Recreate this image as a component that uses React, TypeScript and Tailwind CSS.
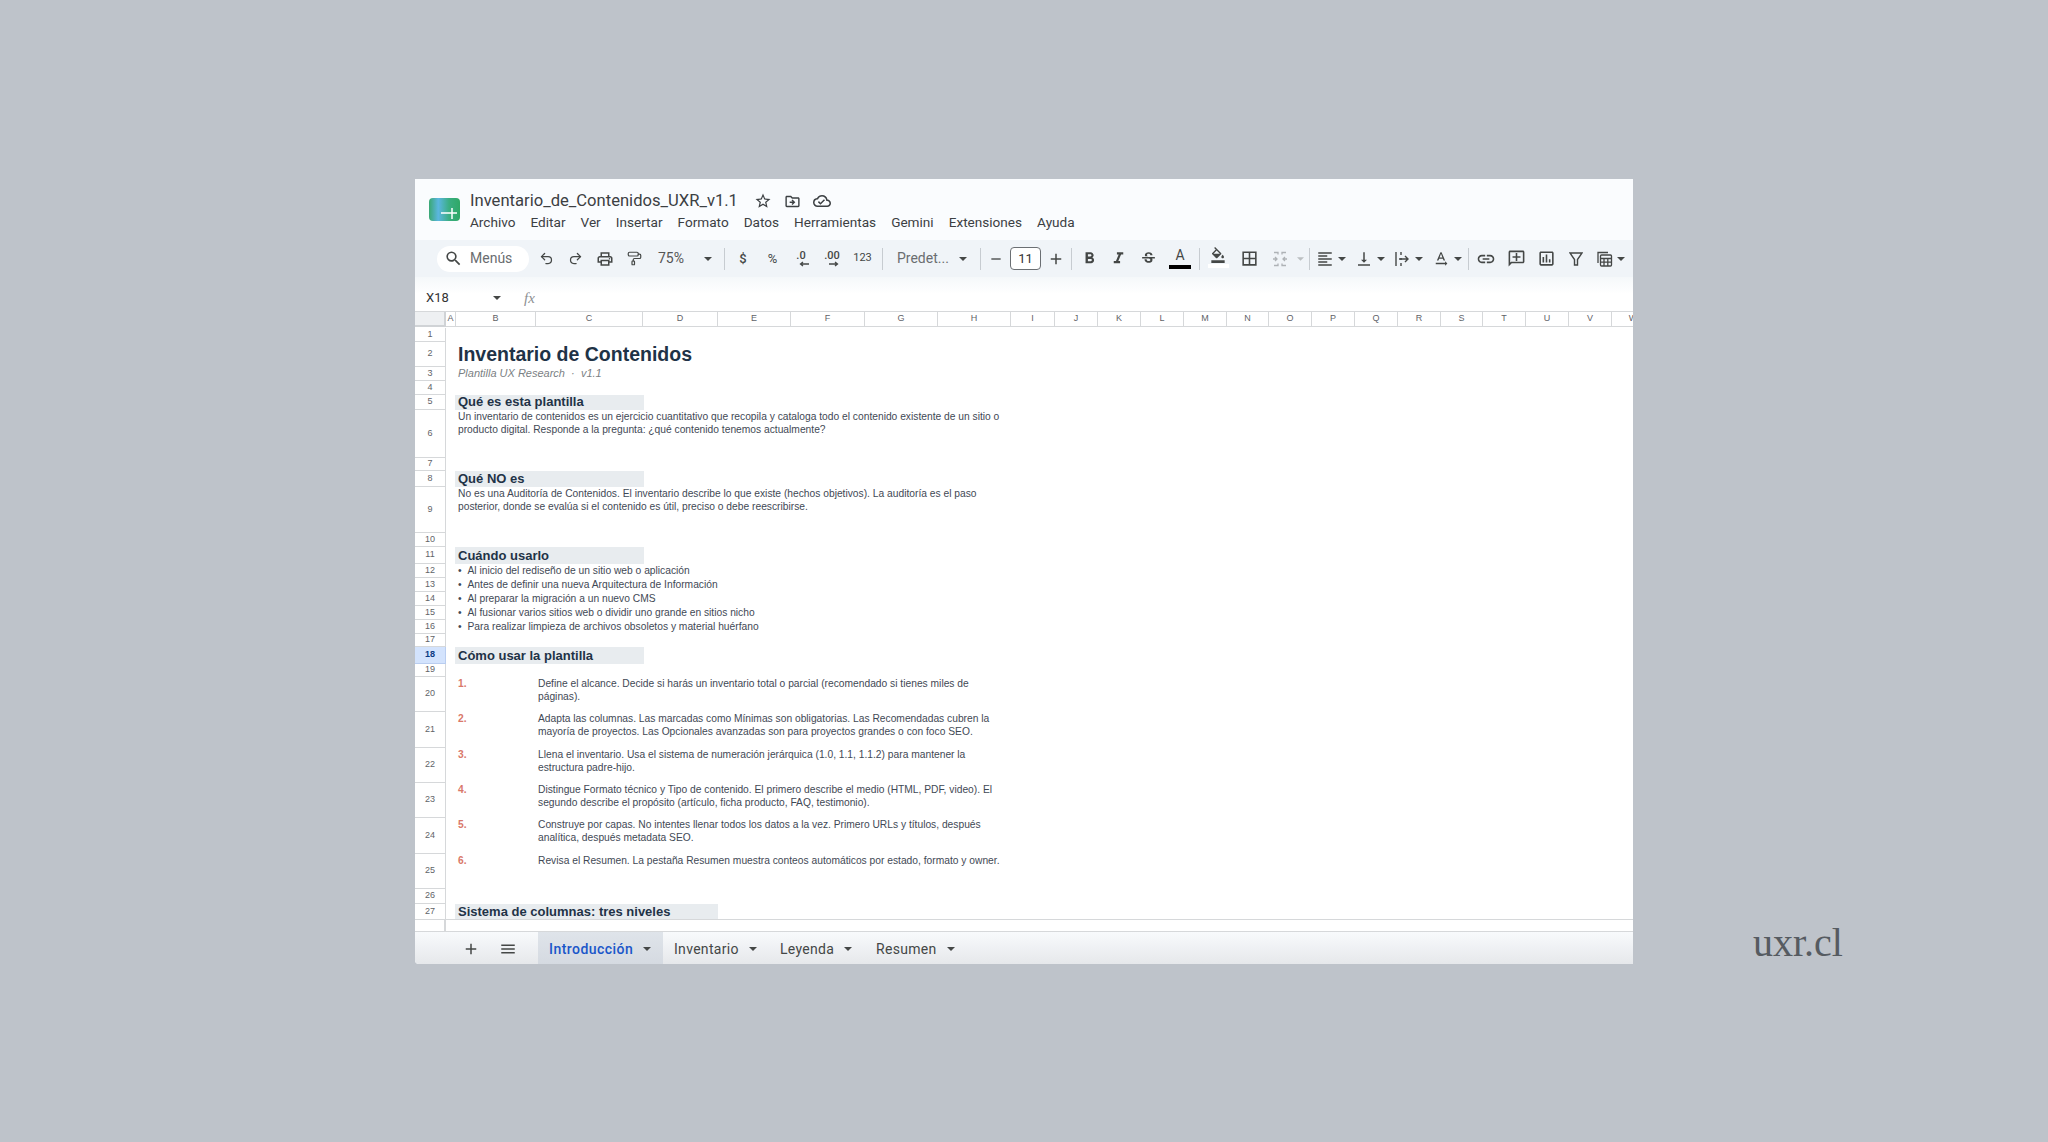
import type { ReactNode } from "react"
import { PaintRoller, Redo2, Undo2 } from "lucide-react"
import {
  MdAdd,
  MdBorderAll,
  MdFormatAlignLeft,
  MdFormatBold,
  MdFormatColorFill,
  MdFormatItalic,
  MdLink,
  MdMenu,
  MdOutlineAddComment,
  MdOutlineCloudDone,
  MdOutlineDriveFileMove,
  MdOutlineInsertChart,
  MdOutlinePrint,
  MdRemove,
  MdSearch,
  MdStarBorder,
  MdStrikethroughS,
  MdTextRotationNone,
  MdVerticalAlignBottom,
} from "react-icons/md"

const ui = "font-['Roboto',sans-serif]"
const sheet = "font-['Liberation_Sans',Arial,sans-serif]"

const menus = ["Archivo", "Editar", "Ver", "Insertar", "Formato", "Datos", "Herramientas", "Gemini", "Extensiones", "Ayuda"]

const columns = [
  ["A", "w-[10px]"],
  ["B", "w-[80px]"],
  ["C", "w-[107px]"],
  ["D", "w-[75px]"],
  ["E", "w-[73px]"],
  ["F", "w-[74px]"],
  ["G", "w-[73px]"],
  ["H", "w-[73px]"],
  ["I", "w-[44px]"],
  ["J", "w-[43px]"],
  ["K", "w-[43px]"],
  ["L", "w-[43px]"],
  ["M", "w-[43px]"],
  ["N", "w-[42px]"],
  ["O", "w-[43px]"],
  ["P", "w-[43px]"],
  ["Q", "w-[43px]"],
  ["R", "w-[43px]"],
  ["S", "w-[42px]"],
  ["T", "w-[43px]"],
  ["U", "w-[43px]"],
  ["V", "w-[43px]"],
  ["W", "w-[43px]"],
]

function Caret({ className = "" }: { className?: string }) {
  return (
    <svg width="8" height="4" viewBox="0 0 8 4" className={`shrink-0 ${className}`}>
      <path d="M0 0h8L4 4z" fill="#444746" />
    </svg>
  )
}

function Sep() {
  return <div className="h-[22px] w-px shrink-0 bg-[#c7ccd1]" />
}

function Slot({ className, children }: { className: string; children: ReactNode }) {
  return <div className={`flex shrink-0 items-center justify-center text-[#444746] ${className}`}>{children}</div>
}

function Drop({ children }: { children: ReactNode }) {
  return (
    <div className="flex w-[38.5px] shrink-0 items-center pl-[6px] text-[#444746]">
      <div className="flex w-[18px] justify-center">{children}</div>
      <Caret className="ml-[4px]" />
    </div>
  )
}

function DecimalIcon({ label, right }: { label: string; right?: boolean }) {
  return (
    <div className="flex flex-col items-center leading-none">
      <span className="text-[11px] leading-[10px] font-medium text-[#444746]">{label}</span>
      <svg width="12" height="6" viewBox="0 0 12 6" className={right ? "ml-[4px]" : "ml-[6px]"}>
        {right ? (
          <path d="M1 3h8M7 1l2.5 2L7 5" fill="none" stroke="#444746" strokeWidth="1.3" />
        ) : (
          <path d="M11 3H3M5 1L2.5 3 5 5" fill="none" stroke="#444746" strokeWidth="1.3" />
        )}
      </svg>
    </div>
  )
}

function Toolbar() {
  return (
    <div className={`flex h-[37px] items-center bg-[#f0f4f8] pl-[22px] ${ui}`}>
      <div className="flex h-[26px] w-[92px] shrink-0 items-center rounded-full bg-white pl-[7px] text-[14px] text-[#6a6d70]">
        <MdSearch size={19} className="text-[#444746]" />
        <span className="ml-[7px]">Menús</span>
      </div>
      <Slot className="ml-[2px] w-[30px]"><Undo2 size={15} strokeWidth={2} /></Slot>
      <Slot className="w-[29px]"><Redo2 size={15} strokeWidth={2} /></Slot>
      <Slot className="w-[29px]"><MdOutlinePrint size={18} /></Slot>
      <Slot className="w-[30px]"><PaintRoller size={15} strokeWidth={1.9} /></Slot>
      <div className="flex w-[75px] shrink-0 items-center justify-between pr-[12px] pl-[9px] text-[14px] text-[#555]">
        <span>75%</span>
        <Caret />
      </div>
      <Sep />
      <Slot className="w-[36px] text-[13px] font-medium">$</Slot>
      <Slot className="w-[23px] text-[13px]">%</Slot>
      <Slot className="w-[34px]"><DecimalIcon label=".0" /></Slot>
      <Slot className="w-[28px]"><DecimalIcon label=".00" right /></Slot>
      <Slot className="w-[33px] text-[11px]">123</Slot>
      <div className="ml-[3px]"><Sep /></div>
      <div className="flex w-[97px] shrink-0 items-center justify-between pr-[13px] pl-[14px] text-[14px] text-[#6a6d70]">
        <span>Predet...</span>
        <Caret />
      </div>
      <Sep />
      <Slot className="w-[29px]"><MdRemove size={16} /></Slot>
      <div className="flex h-[23px] w-[31px] shrink-0 items-center justify-center rounded-[4px] border border-[#6b6f73] bg-white text-[13px] text-[#333]">11</div>
      <Slot className="w-[29px]"><MdAdd size={18} /></Slot>
      <div className="ml-[1px]"><Sep /></div>
      <Slot className="w-[34px]"><MdFormatBold size={19} /></Slot>
      <Slot className="w-[25px]"><MdFormatItalic size={19} /></Slot>
      <Slot className="w-[35px]"><MdStrikethroughS size={17} /></Slot>
      <Slot className="w-[28px] flex-col">
        <span className="text-[14px] leading-[15px]">A</span>
        <div className="mt-[2px] h-[4px] w-[22px] bg-black" />
      </Slot>
      <div className="ml-[5px]"><Sep /></div>
      <Slot className="w-[36px] flex-col">
        <MdFormatColorFill size={16} className="-mt-[3px]" />
        <div className="mt-[1px] h-[4px] w-[21px] bg-white" />
      </Slot>
      <Slot className="w-[26px]"><MdBorderAll size={19} /></Slot>
      <Slot className="w-[36px]">
        <svg width="16" height="16" viewBox="0 0 16 16" fill="none" stroke="#aeb2b6" strokeWidth="1.3">
          <path d="M2 1.5h4v2M2 14.5h4v-2M14 1.5h-4v2M14 14.5h-4v-2M3 6l2 2-2 2M13 6l-2 2 2 2M1 8h4M15 8h-4" />
        </svg>
      </Slot>
      <Caret className="-ml-[1px] w-[7px] opacity-30" />
      <div className="ml-[5px]"><Sep /></div>
      <Drop><MdFormatAlignLeft size={18} /></Drop>
      <Drop><MdVerticalAlignBottom size={18} /></Drop>
      <Drop>
        <svg width="16" height="16" viewBox="0 0 16 16" fill="none" stroke="#444746" strokeWidth="1.4">
          <path d="M2 1v14M7 1v3M7 7v2M7 12v3M5 8h9M11 5l3 3-3 3" />
        </svg>
      </Drop>
      <Drop><MdTextRotationNone size={18} /></Drop>
      <div className="ml-[4px]"><Sep /></div>
      <Slot className="w-[34px]"><MdLink size={20} /></Slot>
      <Slot className="w-[26px]"><MdOutlineAddComment size={19} className="-scale-x-100" /></Slot>
      <Slot className="w-[34px]"><MdOutlineInsertChart size={19} /></Slot>
      <Slot className="w-[25px]">
        <svg width="14" height="16" viewBox="0 0 14 16" fill="none" stroke="#444746" strokeWidth="1.4">
          <path d="M1 2h12L8.5 8.5V14h-3V8.5z" />
        </svg>
      </Slot>
      <div className="flex shrink-0 items-center pl-[8px] text-[#444746]">
        <svg width="18" height="18" viewBox="0 0 18 18" fill="none" stroke="#444746" strokeWidth="1.3">
          <path d="M2 13V2.5h10" />
          <rect x="4.5" y="5" width="11" height="11" rx="1" />
          <path d="M4.5 8.5h11M8 8.5V16M11.8 8.5V16M4.5 12.2h11" />
        </svg>
        <Caret className="ml-[3px]" />
      </div>
    </div>
  )
}

function Corner({ children }: { children?: ReactNode }) {
  return <div className="flex w-[31px] shrink-0 items-center justify-center border-r border-b border-[#d6d8da] text-[9px] text-[#5f6368]">{children}</div>
}

function ColumnHeader() {
  return (
    <div className={`flex h-[17px] border-t border-[#d6d8da] pb-[1px] ${sheet}`}>
      <div className="w-[31px] shrink-0 border-r-2 border-b-2 border-[#d0d3d6] bg-[#eef0f2]" />
      {columns.map(([label, width]) => (
        <div key={label} className={`flex shrink-0 items-center justify-center border-r border-b border-[#d6d8da] text-[9px] text-[#5f6368] ${width}`}>
          {label}
        </div>
      ))}
    </div>
  )
}

function Row({ n, h, active, children }: { n: number; h: string; active?: boolean; children?: ReactNode }) {
  return (
    <div className={`flex ${h}`}>
      {active ? (
        <div className="flex w-[31px] shrink-0 items-center justify-center border-r border-b border-[#b9cdf0] bg-[#d3e3fd] text-[9px] font-bold text-[#0b3a82]">{n}</div>
      ) : (
        <Corner>{n}</Corner>
      )}
      <div className="min-w-0 flex-1">{children}</div>
    </div>
  )
}

function Section({ wide, children }: { wide?: boolean; children: ReactNode }) {
  return (
    <div className={`ml-[9px] flex h-full items-end bg-[#e8ecef] pb-[1px] pl-[3px] text-[13px] leading-[15px] font-bold whitespace-nowrap text-[#1f3347] ${wide ? "w-[263px]" : "w-[189px]"}`}>
      {children}
    </div>
  )
}

function Para({ children }: { children: ReactNode }) {
  return <p className="ml-[12px] pt-[1px] text-[10.25px] leading-[12.5px] whitespace-nowrap text-[#3f4955]">{children}</p>
}

function Bullet({ children }: { children: ReactNode }) {
  return (
    <div className="ml-[12px] flex h-full items-center text-[10.25px] whitespace-nowrap text-[#3f4955]">
      <span className="w-[9.5px]">•</span>
      {children}
    </div>
  )
}

function Step({ n, children }: { n: number; children: ReactNode }) {
  return (
    <div className="ml-[12px] flex pt-[1px] text-[10.25px] leading-[12.5px] whitespace-nowrap text-[#3f4955]">
      <span className="w-[80px] font-bold text-[#d9786a]">{n}.</span>
      <p>{children}</p>
    </div>
  )
}

function Sheet() {
  return (
    <div className={`h-[591px] overflow-hidden ${sheet}`}>
      <Row n={1} h="h-[14px]" />
      <Row n={2} h="h-[25px]">
        <h1 className="ml-[12px] text-[19.5px] leading-[25px] font-bold whitespace-nowrap text-[#1f3347]">Inventario de Contenidos</h1>
      </Row>
      <Row n={3} h="h-[14px]">
        <p className="ml-[12px] -mt-[1px] text-[11px] leading-[14px] whitespace-pre text-[#7b7f84] italic">Plantilla UX Research  ·  v1.1</p>
      </Row>
      <Row n={4} h="h-[14px]" />
      <Row n={5} h="h-[15px]"><Section>Qué es esta plantilla</Section></Row>
      <Row n={6} h="h-[48px]">
        <Para>
          Un inventario de contenidos es un ejercicio cuantitativo que recopila y cataloga todo el contenido existente de un sitio o
          <br />
          producto digital. Responde a la pregunta: ¿qué contenido tenemos actualmente?
        </Para>
      </Row>
      <Row n={7} h="h-[13px]" />
      <Row n={8} h="h-[16px]"><Section>Qué NO es</Section></Row>
      <Row n={9} h="h-[46px]">
        <Para>
          No es una Auditoría de Contenidos. El inventario describe lo que existe (hechos objetivos). La auditoría es el paso
          <br />
          posterior, donde se evalúa si el contenido es útil, preciso o debe reescribirse.
        </Para>
      </Row>
      <Row n={10} h="h-[14px]" />
      <Row n={11} h="h-[17px]"><Section>Cuándo usarlo</Section></Row>
      <Row n={12} h="h-[14px]"><Bullet>Al inicio del rediseño de un sitio web o aplicación</Bullet></Row>
      <Row n={13} h="h-[14px]"><Bullet>Antes de definir una nueva Arquitectura de Información</Bullet></Row>
      <Row n={14} h="h-[14px]"><Bullet>Al preparar la migración a un nuevo CMS</Bullet></Row>
      <Row n={15} h="h-[14px]"><Bullet>Al fusionar varios sitios web o dividir uno grande en sitios nicho</Bullet></Row>
      <Row n={16} h="h-[14px]"><Bullet>Para realizar limpieza de archivos obsoletos y material huérfano</Bullet></Row>
      <Row n={17} h="h-[13px]" />
      <Row n={18} h="h-[17px]" active><Section>Cómo usar la plantilla</Section></Row>
      <Row n={19} h="h-[13px]" />
      <Row n={20} h="h-[35px]">
        <Step n={1}>
          Define el alcance. Decide si harás un inventario total o parcial (recomendado si tienes miles de
          <br />
          páginas).
        </Step>
      </Row>
      <Row n={21} h="h-[36px]">
        <Step n={2}>
          Adapta las columnas. Las marcadas como Mínimas son obligatorias. Las Recomendadas cubren la
          <br />
          mayoría de proyectos. Las Opcionales avanzadas son para proyectos grandes o con foco SEO.
        </Step>
      </Row>
      <Row n={22} h="h-[35px]">
        <Step n={3}>
          Llena el inventario. Usa el sistema de numeración jerárquica (1.0, 1.1, 1.1.2) para mantener la
          <br />
          estructura padre-hijo.
        </Step>
      </Row>
      <Row n={23} h="h-[35px]">
        <Step n={4}>
          Distingue Formato técnico y Tipo de contenido. El primero describe el medio (HTML, PDF, video). El
          <br />
          segundo describe el propósito (artículo, ficha producto, FAQ, testimonio).
        </Step>
      </Row>
      <Row n={24} h="h-[36px]">
        <Step n={5}>
          Construye por capas. No intentes llenar todos los datos a la vez. Primero URLs y títulos, después
          <br />
          analítica, después metadata SEO.
        </Step>
      </Row>
      <Row n={25} h="h-[35px]">
        <Step n={6}>Revisa el Resumen. La pestaña Resumen muestra conteos automáticos por estado, formato y owner.</Step>
      </Row>
      <Row n={26} h="h-[15px]" />
      <Row n={27} h="h-[16px]"><Section wide>Sistema de columnas: tres niveles</Section></Row>
    </div>
  )
}

function Tab({ label, active, className }: { label: string; active?: boolean; className: string }) {
  return (
    <div className={`flex h-full shrink-0 items-center pt-[2px] text-[14px] ${active ? "bg-linear-to-b from-[#dfe4ea] to-[#d5dae1] font-medium tracking-[0.45px] text-[#1a56c9]" : "tracking-[0.3px] text-[#444746]"} ${className}`}>
      <span>{label}</span>
      <Caret className="ml-[10px]" />
    </div>
  )
}

function TabBar() {
  return (
    <div className={`flex h-[33px] items-center border-t border-[#d6d8da] bg-linear-to-b from-[#f8fafc] to-[#e6e8eb] ${ui}`}>
      <Slot className="ml-[45px] w-[22px] pt-[2px] text-[#555]"><MdAdd size={18} /></Slot>
      <Slot className="ml-[15px] w-[22px] pt-[2px] text-[#555]"><MdMenu size={18} /></Slot>
      <Tab label="Introducción" active className="ml-[19px] w-[125px] pl-[11px]" />
      <Tab label="Inventario" className="w-[117px] pl-[11px]" />
      <Tab label="Leyenda" className="w-[96px] pl-[0px]" />
      <Tab label="Resumen" className="w-[96px] pl-[0px]" />
    </div>
  )
}

export default function App() {
  return (
    <div className="flex h-[1142px] w-[2048px] items-start overflow-hidden bg-[#bec3ca] pt-[179px] pl-[415px]">
      <div className="flex h-[785px] w-[1218px] shrink-0 flex-col overflow-hidden rounded-bl-[4px] bg-white">
        {/* Cabecera */}
        <div className={`flex h-[61px] bg-[#fafcfe] pt-[10px] pl-[14px] ${ui}`}>
          <svg width="31" height="23" viewBox="0 0 31 23" className="mt-[9px] shrink-0">
            <defs>
              <linearGradient id="logo" x1="0" y1="0" x2="1" y2="0">
                <stop offset="0" stopColor="#3aa873" />
                <stop offset="0.3" stopColor="#5bb6e0" />
                <stop offset="0.65" stopColor="#3aae82" />
                <stop offset="1" stopColor="#2fa866" />
              </linearGradient>
            </defs>
            <rect width="31" height="23" rx="4" fill="url(#logo)" />
            <path d="M12 15h16M23 10v11" stroke="#fff" strokeWidth="1.5" />
          </svg>
          <div className="ml-[10px]">
            <div className="flex h-[24px] items-center text-[#3c4043]">
              <span className="text-[16.6px] leading-[24px] whitespace-nowrap">Inventario_de_Contenidos_UXR_v1.1</span>
              <MdStarBorder size={18} className="ml-[16px]" />
              <MdOutlineDriveFileMove size={17} className="ml-[12px]" />
              <MdOutlineCloudDone size={18} className="ml-[12px]" />
            </div>
            <div className="flex h-[18px] items-center gap-[15px] text-[13.6px] whitespace-nowrap text-[#3c4043]">
              {menus.map((m) => (
                <span key={m}>{m}</span>
              ))}
            </div>
          </div>
        </div>

        <Toolbar />

        {/* Barra de fórmulas */}
        <div className={`flex h-[34px] items-center bg-linear-to-b from-[#f5f8fa] via-white to-white pt-[8px] pl-[11px] ${ui}`}>
          <span className="w-[67px] text-[13px] text-[#333]">X18</span>
          <Caret />
          <span className="ml-[23px] font-['Liberation_Serif',serif] text-[15px] text-[#8d9093] italic">fx</span>
        </div>

        <ColumnHeader />
        <Sheet />

        {/* Barra de desplazamiento */}
        <div className="flex h-[12px] border-t border-[#d6d8da]">
          <div className="w-[31px] border-r-2 border-[#d6d8da]" />
        </div>

        <TabBar />
      </div>

      <span className="mt-[735px] ml-[120px] font-['Liberation_Serif',serif] text-[40px] leading-[58px] text-[#565b61]">uxr.cl</span>
    </div>
  )
}
